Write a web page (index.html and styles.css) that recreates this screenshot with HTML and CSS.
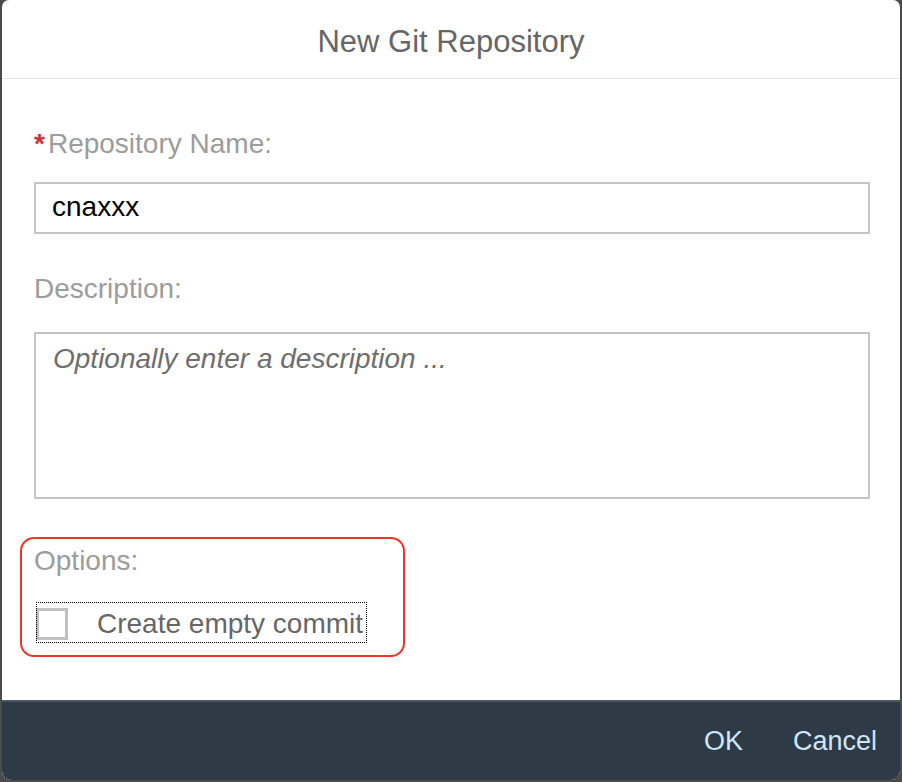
FILE: index.html
```html
<!DOCTYPE html>
<html lang="en">
<head>
<meta charset="utf-8">
<title>New Git Repository</title>
<link rel="stylesheet" href="styles.css">
</head>
<body>
<div class="dialog">
  <header class="dialog-header">
    <h1 class="dialog-title">New Git Repository</h1>
  </header>
  <div class="dialog-content">
    <div class="field-label required"><span class="asterisk">*</span>Repository Name:</div>
    <div class="text-input">cnaxxx</div>
    <div class="field-label desc-label">Description:</div>
    <div class="text-area"><span class="placeholder">Optionally enter a description ...</span></div>
    <div class="options-box">
      <div class="field-label options-label">Options:</div>
      <div class="check-row">
        <span class="checkbox"></span>
        <span class="check-text">Create empty commit</span>
      </div>
    </div>
  </div>
  <footer class="dialog-footer">
    <span class="footer-btn">OK</span>
    <span class="footer-btn">Cancel</span>
  </footer>
</div>
</body>
</html>
```

FILE: styles.css
```css
html, body {
  margin: 0;
  padding: 0;
}
body {
  background: #4b4b4b;
  width: 902px;
  height: 782px;
  overflow: hidden;
  font-family: "Liberation Sans", Arial, sans-serif;
}
.dialog {
  margin-left: 2px;
  width: 898px;
  height: 780px;
  background: #ffffff;
  border-radius: 7px 7px 9px 9px;
  display: flex;
  flex-direction: column;
  overflow: hidden;
}
.dialog-header {
  height: 72px;
  padding-top: 6px;
  border-bottom: 1px solid #e6e6e6;
  text-align: center;
}
.dialog-title {
  margin: 0;
  font-weight: normal;
  font-size: 31px;
  line-height: 72px;
  color: #666666;
}
.dialog-content {
  padding: 49px 30px 0 32px;
  display: flex;
  flex-direction: column;
}
.field-label {
  font-size: 28px;
  line-height: 32px;
  color: #9c9c9c;
}
.asterisk {
  color: #c8343a;
  font-weight: bold;
  margin-right: 3px;
}
.text-input {
  margin-top: 22px;
  height: 48px;
  border: 2px solid #c4c4c4;
  padding-left: 16px;
  font-size: 28px;
  line-height: 46px;
  color: #000000;
}
.desc-label {
  margin-top: 39px;
}
.text-area {
  margin-top: 27px;
  height: 154px;
  border: 2px solid #c4c4c4;
  padding: 9px 16px 0 17px;
  font-size: 28px;
  line-height: 32px;
}
.placeholder {
  font-style: italic;
  color: #6e6e6e;
}
.options-box {
  margin-top: 38px;
  margin-left: -14px;
  width: 385px;
  box-sizing: border-box;
  border: 2px solid #f3322a;
  border-radius: 14px;
  padding: 6px 12px 12px 12px;
}
.check-row {
  margin-top: 25px;
  margin-left: 2px;
  width: 331px;
  height: 38px;
  padding-top: 3px;
  display: flex;
  align-items: center;
  outline: 1px dotted #000000;
  outline-offset: -1px;
}
.checkbox {
  width: 26px;
  height: 26px;
  border: 3px solid #c0c0c0;
  background: #ffffff;
  flex: none;
}
.check-text {
  margin-left: 29px;
  font-size: 28px;
  line-height: 32px;
  color: #666666;
  white-space: nowrap;
}
.dialog-footer {
  margin-top: auto;
  height: 78px;
  background: #2e3a46;
  border-top: 2px solid #4a5866;
  display: flex;
  justify-content: flex-end;
  align-items: center;
  gap: 28px;
  padding-right: 12px;
}
.footer-btn {
  padding: 0 11px;
  font-size: 27px;
  line-height: 78px;
  color: #d0e6fb;
}
```
